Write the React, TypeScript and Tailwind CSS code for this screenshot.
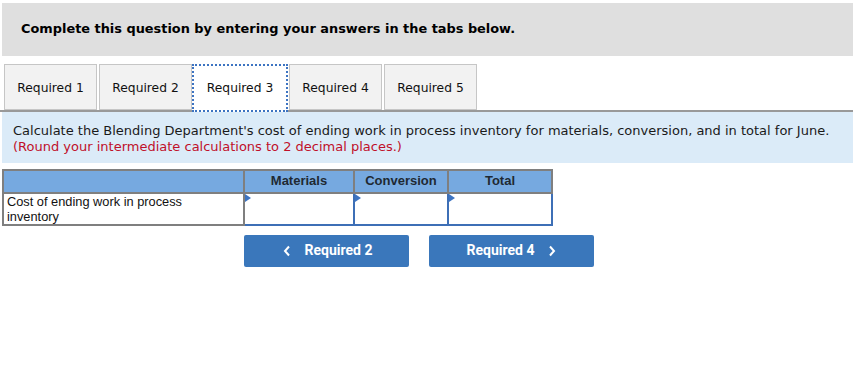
import React from "react";

const tabs = ["Required 1", "Required 2", "Required 3", "Required 4", "Required 5"];

function InputCell({ w }: { w: string }) {
  return (
    <td className={`${w} border-2 border-[#3d6fb6] p-0 relative h-[31px]`}>
      <svg className="absolute left-0 top-0" width="6" height="8" viewBox="0 0 6 8">
        <polygon points="0,0 6,4 0,8" fill="#3d74c2" />
      </svg>
    </td>
  );
}

export default function App() {
  return (
    <div className="w-[859px] h-[386px] bg-white relative overflow-hidden" style={{ fontFamily: "'DejaVu Sans', Verdana, sans-serif" }}>
      <div className="ml-[2px] mr-[6px] mt-[3px] h-[53px] bg-[#dfdfdf] pl-[19px] pt-[13px]">
        <span className="text-[12.9px] font-bold text-black">Complete this question by entering your answers in the tabs below.</span>
      </div>
      <div className="mt-[8px] mr-[6px] flex items-end pl-[4px] border-b-2 border-[#999999] h-[48px]">
        {tabs.map((t, i) =>
          i === 2 ? (
            <div key={t} className="w-[96px] h-[48px] -mb-[2px] -mr-[1px] bg-white border-2 border-dotted border-[#3d74c2] flex items-center justify-center text-[12.3px] text-[#111] pt-0">
              {t}
            </div>
          ) : (
            <div key={t} className={`w-[93px] h-[46px] bg-[#f2f2f2] border border-[#c6c6c6] flex items-center justify-center text-[12.3px] text-[#111] pt-[3px] ${i === 0 ? "" : "ml-[2px]"}`}>
              {t}
            </div>
          )
        )}
      </div>
      <div className="ml-[2px] mr-[6px] h-[51px] bg-[#dbebf8] pl-[11px] pt-[11px] text-[13px] leading-[16px]">
        <div className="text-[#1a1a1a]">Calculate the Blending Department's cost of ending work in process inventory for materials, conversion, and in total for June.</div>
        <div className="text-[#c0102a]">(Round your intermediate calculations to 2 decimal places.)</div>
      </div>
      <table className="ml-[2px] mt-[6px] border-collapse border-2 border-[#7f7f7f]" style={{ fontFamily: "'Liberation Sans', Arial, sans-serif" }}>
        <thead>
          <tr className="bg-[#76a9e0] h-[22px]">
            <th className="w-[241px] border-2 border-[#7f7f7f]"></th>
            <th className="w-[110px] border-2 border-[#7f7f7f] text-[13px] font-bold text-[#1f2933] pb-[1px]">Materials</th>
            <th className="w-[94px] border-2 border-[#7f7f7f] text-[13px] font-bold text-[#1f2933] pb-[1px]">Conversion</th>
            <th className="w-[104px] border-2 border-[#7f7f7f] text-[13px] font-bold text-[#1f2933] pb-[1px]">Total</th>
          </tr>
        </thead>
        <tbody>
          <tr>
            <td className="border-2 border-[#7f7f7f] text-[12.8px] leading-[15px] pl-[3px] align-top pt-0 text-[#111]">
              Cost of ending work in process
              <br />
              inventory
            </td>
            <InputCell w="w-[110px]" />
            <InputCell w="w-[94px]" />
            <InputCell w="w-[104px]" />
          </tr>
        </tbody>
      </table>
      <div className="ml-[244px] mt-[9px] flex gap-[20px]" style={{ fontFamily: "Roboto, sans-serif" }}>
        <button className="w-[165px] h-[32px] bg-[#3a77bb] rounded-[2px] text-white font-bold text-[14px] flex items-center justify-center gap-[14px] pl-[2px]">
          <svg width="8" height="12" viewBox="0 0 8 12"><polyline points="6,1.5 2,6 6,10.5" fill="none" stroke="white" strokeWidth="2" /></svg>
          Required 2
        </button>
        <button className="w-[165px] h-[32px] bg-[#3a77bb] rounded-[2px] text-white font-bold text-[14px] flex items-center justify-center gap-[14px]">
          Required 4
          <svg width="8" height="12" viewBox="0 0 8 12"><polyline points="2,1.5 6,6 2,10.5" fill="none" stroke="white" strokeWidth="2" /></svg>
        </button>
      </div>
    </div>
  );
}
